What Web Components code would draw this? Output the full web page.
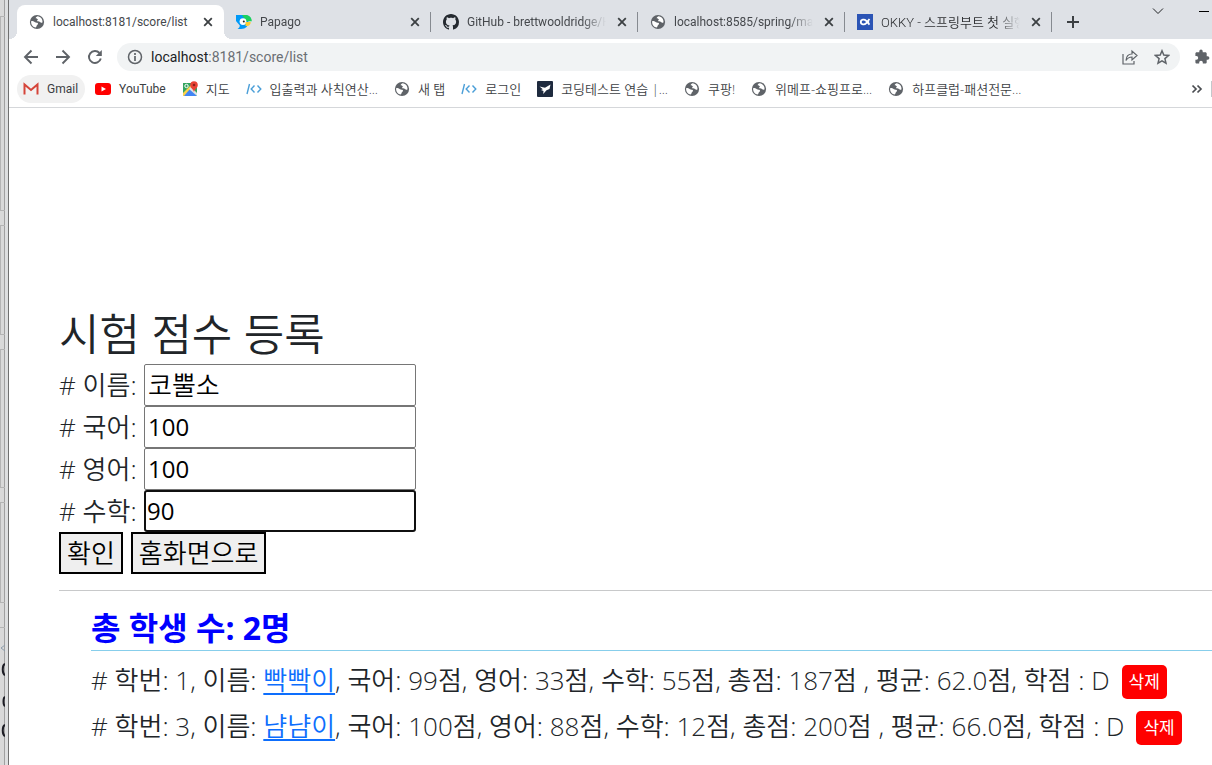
<!DOCTYPE html>
<html lang="ko">
<head>
<meta charset="UTF-8">
<title>localhost:8181/score/list</title>
<style>
  body {
    margin: 0;
    font-family: "Open Sans", "Noto Sans CJK KR", sans-serif;
    background: #fff;
  }
</style>
</head>
<body>
<browser-window>
  <tab-strip slot="top">
    <browser-tab icon="globe" active>localhost:8181/score/list</browser-tab>
    <browser-tab icon="papago">Papago</browser-tab>
    <browser-tab icon="github">GitHub - brettwooldridge/HikariCP</browser-tab>
    <browser-tab icon="globe">localhost:8585/spring/main</browser-tab>
    <browser-tab icon="okky" lang="ko">OKKY - 스프링부트 첫 실행</browser-tab>
  </tab-strip>
  <address-bar slot="top" host="localhost" path=":8181/score/list"></address-bar>
  <bookmark-bar slot="top">
    <bookmark-link icon="gmail" hot>Gmail</bookmark-link>
    <bookmark-link icon="youtube">YouTube</bookmark-link>
    <bookmark-link icon="maps" lang="ko">지도</bookmark-link>
    <bookmark-link icon="code" lang="ko">입출력과 사칙연산...</bookmark-link>
    <bookmark-link icon="globe" lang="ko">새 탭</bookmark-link>
    <bookmark-link icon="code" lang="ko">로그인</bookmark-link>
    <bookmark-link icon="programmers" lang="ko">코딩테스트 연습 |...</bookmark-link>
    <bookmark-link icon="globe" lang="ko">쿠팡!</bookmark-link>
    <bookmark-link icon="globe" lang="ko">위메프-쇼핑프로...</bookmark-link>
    <bookmark-link icon="globe" lang="ko">하프클럽-패션전문...</bookmark-link>
  </bookmark-bar>
  <score-form></score-form>
  <score-list></score-list>
</browser-window>

<script>
const icons = {
  globe: '<circle cx="8" cy="8" r="7.1" fill="#5f6368"/><path d="M2.3 7.1C3.5 7 5 7.6 6 8.3c.9.7 2.200.2 2.900 1 .5.7-.3 1.500-.9 2-.7.700-.5 1.700-1.200 2.200C4.100 13.300 2.100 11 2.100 8zM8.500 2.200c-1.200.5-2 1.300-1.700 2 .4.800 1.700.3 2 1 .3.800-1 1-.700 1.700.4.700 1.700.3 2.500.8.900.5 1.400 1.200 2.900.9C13.900 5.300 11.800 2.500 8.500 2.200z" fill="#fff"/>',
  papago: '<path d="M0 1h9c2.500 0 4.500 1 5.500 3L12 8c.4 4-2 7-7 7H1.500C3 14 3.800 13 3.800 11.500L0 7z" fill="#0099f7"/><path d="M6 1h3.500C13 1 15.800 3.500 15.800 7.200H10L8 4z" fill="#1bd15d"/><circle cx="7" cy="7.600" r="3.400" fill="#fff"/><circle cx="7.800" cy="7.400" r="1" fill="#222"/><path d="M9.500 8h5.200c0 3.300-2 4.500-5.200 4z" fill="#ffce32"/>',
  github: '<path fill="#24292f" d="M8 0C3.580 0 0 3.580 0 8c0 3.540 2.290 6.530 5.470 7.590.4.070.55-.17.55-.38 0-.19-.01-.82-.01-1.490-2.010.37-2.530-.49-2.690-.94-.09-.23-.48-.94-.82-1.130-.28-.15-.68-.52-.01-.53.63-.01 1.080.58 1.230.82.72 1.210 1.870.87 2.330.66.07-.52.28-.87.51-1.070-1.780-.2-3.640-.89-3.640-3.950 0-.87.31-1.590.82-2.150-.08-.2-.36-1.020.08-2.120 0 0 .67-.21 2.200.82.64-.18 1.320-.27 2-.27s1.360.09 2 .27c1.530-1.040 2.200-.82 2.200-.82.44 1.100.16 1.920.08 2.120.51.56.82 1.270.82 2.150 0 3.070-1.870 3.750-3.650 3.950.29.25.54.73.54 1.480 0 1.070-.01 1.930-.01 2.200 0 .21.15.46.55.38A8 8 0 0 0 16 8c0-4.420-3.580-8-8-8z"/>',
  okky: '<path d="M0 0h16v16H0z" fill="#2b54b5"/><path d="M12.500 5 9 9.300C7.500 11 3.800 10.700 3.800 8S7.500 5 9 6.700l3.500 4" fill="none" stroke="#fff" stroke-width="1.800"/><circle cx="11.300" cy="8" r="1" fill="#fff"/>',
  gmail: '<path d="M.5 13V3l7.500 6 7.500-6v10" fill="#f3f3f3"/><path d="M1.500 13.500V3.500L8 9l6.500-5.500v10" fill="none" stroke="#d5453a" stroke-width="2"/>',
  youtube: '<rect y="2" width="16" height="12" rx="3" fill="#f00"/><path d="M6.500 5.500v5L11 8z" fill="#fff"/>',
  maps: '<path d="M1 2h14v13H1z" fill="#34a45f"/><path d="m1 15 7-7 7 7z" fill="#4285f4"/><path d="M1 12 11 2h2L2 15H1z" fill="#fbd24b"/><path d="m7 8 2-2 6 6v3z" fill="#dfe3e5"/><circle cx="4.500" cy="5" r="1.700" fill="none" stroke="#fff"/><path d="M8.200 4a3.800 3.800 0 0 1 7.600 0c0 3-3 3.700-3.800 7-.8-3.300-3.800-4-3.800-7z" fill="#e94335"/><circle cx="12" cy="4" r="1.300" fill="#8c2119"/>',
  code: '<path d="M3.500 3 1 13M8.500 4.500 5.200 8l3.300 3.500M11.500 4.500 14.800 8l-3.300 3.500" fill="none" stroke="#4b9fd8" stroke-width="1.400"/>',
  programmers: '<rect width="16" height="16" rx="1" fill="#1e2a3e"/><path d="M2.500 5.500 8 6.800 13.500 3.500 12.500 8l-3 1.200L6.200 13l.3-3L4 9l1.800-.8z" fill="#fff"/>',
  close: '<path d="m4.200 4.200 7.600 7.600m0-7.600-7.600 7.600" stroke="#3c4043" stroke-width="1.800"/>',
  plus: '<path d="M8 2v12M2 8h12" stroke="#3c4043" stroke-width="2"/>',
  chevron: '<path d="m3 5.500 5 5 5-5" fill="none" stroke="#202124"/>',
  minimize: '<path d="M3 8.500h10" stroke="#000"/>',
  back: '<path d="M15 8H2m6.500-6.500L2 8l6.500 6.500" fill="none" stroke="#5f6368" stroke-width="1.900"/>',
  forward: '<path d="M1 8h13M7.500 1.500 14 8l-6.500 6.500" fill="none" stroke="#5f6368" stroke-width="1.900"/>',
  reload: '<path d="M13.800 9.500A6 6 0 1 1 12.500 4" fill="none" stroke="#5f6368" stroke-width="1.900"/><path d="M14.800 1v6H8.800z" fill="#5f6368"/>',
  info: '<circle cx="8" cy="8" r="6.500" fill="none" stroke="#5f6368" stroke-width="1.500"/><path d="M8 7v5M8 4v2" stroke="#5f6368" stroke-width="1.700"/>',
  share: '<path d="M1 5v10h11v-3M4 11.500C4.300 7 6.500 5 10 5V2l5 4.500-5 4.500V8C7.500 8 5.500 9 4 11.500z" fill="none" stroke="#5f6368" stroke-width="1.200"/>',
  star: '<path d="m8 1.800 1.800 4.300 4.700.4-3.600 3.100 1.100 4.600L8 11.800l-4 2.400 1.100-4.600L1.500 6.500l4.700-.4z" fill="none" stroke="#5f6368" stroke-width="1.500"/>',
  puzzle: '<path d="M13.700 7.300h-1V4.600c0-.7-.6-1.300-1.300-1.300H8.700v-1a1.700 1.700 0 0 0-3.400 0v1H2.700c-.7 0-1.300.6-1.300 1.300v2.500h1a1.800 1.800 0 0 1 0 3.600h-1v2.600c0 .7.600 1.300 1.300 1.300h2.500v-1a1.800 1.800 0 0 1 3.600 0v1h2.600c.7 0 1.300-.6 1.300-1.300v-2.600h1a1.700 1.700 0 0 0 0-3.400z" fill="#5f6368"/>',
  more: '<path d="m3.500 4.500 3.500 3.500-3.500 3.500m5-7L12 8l-3.500 3.500" fill="none" stroke="#4a4d51" stroke-width="1.700"/>'
};

function icon(name, size = 16) {
  return `<svg width="${size}" height="${size}" viewBox="0 0 16 16" aria-hidden="true">${icons[name]}</svg>`;
}

const baseStyle = `
  :host, * { box-sizing: border-box; }
  svg { flex: none; display: block; }
  button { font: inherit; }
  .icon-btn {
    display: flex;
    padding: 0;
    border: 0;
    background: none;
  }
`;

class BrowserWindow extends HTMLElement {
  connectedCallback() {
    this.attachShadow({ mode: 'open' });
    this.shadowRoot.innerHTML = `
      <style>
        ${baseStyle}
        :host {
          display: flex;
          height: 100vh;
          overflow: hidden;
        }
        /* edge of the windows lying behind the browser */
        .behind {
          flex: none;
          display: flex;
          flex-direction: column;
          gap: 14px;
          width: 9px;
          padding-top: 16px;
          background: #d9d9d9;
          border-right: 1px solid #707070;
          box-shadow: inset -3px 0 #dedfe0, inset -4px 0 #a0a0a0;
        }
        .panel {
          width: 5px;
          border: 1px solid #b4b4b4;
          border-right: 0;
        }
        .p1 { flex: 196; }
        .p2 { flex: 110; }
        .p3 { flex: 140; }
        .p4 { flex: 100; }
        .rest { flex: 151; }
        .window {
          flex: 1;
          min-width: 0;
          overflow: hidden;
        }
        header { border-bottom: 1px solid #d5d7da; }
        main { padding: 202px 0 0 50px; }
      </style>
      <div class="behind">
        <div class="panel p1"></div>
        <div class="panel p2"></div>
        <div class="panel p3"></div>
        <div class="panel p4"></div>
        <div class="rest">
          <svg width="5" height="140" viewBox="0 0 5 140" fill="none" aria-hidden="true">
            <path d="M0 10.500h5" stroke="#b4b4b4"/>
            <path d="m5 28-4 3 4 3" stroke="#8c9cab"/>
            <path d="M5 47c-3 1-3 10 0 11M5 80c-2 1-2 8 0 9M5 108c-3 1-3 10 0 11" stroke="#1c1c24" stroke-width="2"/>
          </svg>
        </div>
      </div>
      <div class="window">
        <header><slot name="top"></slot></header>
        <main><slot></slot></main>
      </div>
    `;
  }
}

class TabStrip extends HTMLElement {
  connectedCallback() {
    this.attachShadow({ mode: 'open' });
    this.shadowRoot.innerHTML = `
      <style>
        ${baseStyle}
        :host {
          display: flex;
          height: 39px;
          padding: 5px 0 0 8px;
          background: #dee1e6;
          font-family: Roboto, "Noto Sans CJK KR", sans-serif;
        }
        .tabs {
          display: flex;
          flex: 0 1 1035px;
          min-width: 0;
        }
        .new { align-items: center; margin-left: 13px; }
        .controls {
          display: flex;
          gap: 30px;
          height: 12px;
          align-items: center;
          margin-left: auto;
        }
      </style>
      <div class="tabs"><slot></slot></div>
      <button class="icon-btn new" aria-label="새 탭">${icon('plus')}</button>
      <div class="controls">
        <button class="icon-btn" aria-label="탭 검색">${icon('chevron')}</button>
        <button class="icon-btn" aria-label="최소화">${icon('minimize')}</button>
      </div>
    `;
  }
}

class BrowserTab extends HTMLElement {
  connectedCallback() {
    this.attachShadow({ mode: 'open' });
    this.shadowRoot.innerHTML = `
      <style>
        ${baseStyle}
        :host {
          position: relative;
          display: flex;
          flex: 1 1 0;
          min-width: 0;
          align-items: center;
          gap: 8px;
          padding: 0 8px 0 12px;
          font-size: 12px;
          color: #45484c;
          background: linear-gradient(#868a90, #868a90) right center / 1px 20px no-repeat;
        }
        :host([active]) {
          border-radius: 8px 8px 0 0;
          background: #fff;
        }
        :host([active])::before,
        :host([active])::after {
          content: "";
          position: absolute;
          bottom: 0;
          width: 8px;
          height: 8px;
        }
        :host([active])::before {
          right: 100%;
          background: radial-gradient(circle at 0 0, transparent 8px, #fff 8px);
        }
        :host([active])::after {
          left: 100%;
          background: radial-gradient(circle at 100% 0, transparent 8px, #fff 8px);
        }
        .title {
          flex: 1;
          overflow: hidden;
          white-space: nowrap;
          mask-image: linear-gradient(to left, transparent, #000 24px);
        }
        :host([active]) .title { mask-image: none; }
        :host([lang="ko"]) .title {
          padding-bottom: 2px;
          font-size: 13px;
          font-weight: 350;
          color: #2c2e31;
        }
      </style>
      ${icon(this.getAttribute('icon'))}
      <span class="title"><slot></slot></span>
      <button class="icon-btn" aria-label="탭 닫기">${icon('close')}</button>
    `;
  }
}

class AddressBar extends HTMLElement {
  connectedCallback() {
    this.attachShadow({ mode: 'open' });
    this.shadowRoot.innerHTML = `
      <style>
        ${baseStyle}
        :host {
          display: flex;
          align-items: center;
          padding: 4px 0 4px 14px;
          font-family: Roboto, "Noto Sans CJK KR", sans-serif;
        }
        .nav { display: flex; gap: 16px; }
        .box {
          display: flex;
          flex: 1;
          align-items: center;
          gap: 8px;
          height: 28px;
          margin: 0 14px;
          padding: 0 10px;
          border-radius: 14px;
          background: #f1f3f4;
          font-size: 14px;
          color: #6a6e73;
        }
        .url { flex: 1; }
        b { font-weight: 400; color: #202124; }
        .actions { display: flex; gap: 16px; }
        .ext { margin-right: 2px; }
      </style>
      <div class="nav">
        <button class="icon-btn" aria-label="뒤로">${icon('back')}</button>
        <button class="icon-btn" aria-label="앞으로">${icon('forward')}</button>
        <button class="icon-btn" aria-label="새로고침">${icon('reload')}</button>
      </div>
      <div class="box">
        ${icon('info')}
        <span class="url"><b>${this.getAttribute('host')}</b>${this.getAttribute('path')}</span>
        <div class="actions">
          <button class="icon-btn" aria-label="공유">${icon('share')}</button>
          <button class="icon-btn" aria-label="북마크">${icon('star')}</button>
        </div>
      </div>
      <button class="icon-btn ext" aria-label="확장 프로그램">${icon('puzzle')}</button>
    `;
  }
}

class BookmarkBar extends HTMLElement {
  connectedCallback() {
    this.attachShadow({ mode: 'open' });
    this.shadowRoot.innerHTML = `
      <style>
        ${baseStyle}
        :host {
          display: flex;
          align-items: center;
          height: 32px;
          padding: 0 0 4px 8px;
        }
        .more {
          margin-left: auto;
          padding-right: 6px;
          border-right: 1px solid #c4c7cb;
        }
      </style>
      <slot></slot>
      <button class="icon-btn more" aria-label="북마크 더보기">${icon('more')}</button>
    `;
  }
}

class BookmarkLink extends HTMLElement {
  connectedCallback() {
    this.attachShadow({ mode: 'open' });
    this.shadowRoot.innerHTML = `
      <style>
        ${baseStyle}
        :host {
          display: block;
          font-family: Roboto, sans-serif;
          font-size: 12px;
        }
        :host([lang="ko"]) {
          font-family: "Open Sans", "Noto Sans CJK KR", sans-serif;
          font-size: 13px;
          font-weight: 350;
        }
        a {
          display: flex;
          align-items: center;
          gap: 8px;
          height: 28px;
          margin-right: 4px;
          padding: 0 6px;
          border-radius: 14px;
          white-space: nowrap;
          color: #3c4043;
          text-decoration: none;
        }
        :host([lang="ko"]) span { padding-bottom: 2px; }
        :host([hot]) a { padding-right: 7px; background: #f1f1f1; }
      </style>
      <a href="#">${icon(this.getAttribute('icon'))}<span><slot></slot></span></a>
    `;
  }
}

class ScoreForm extends HTMLElement {
  connectedCallback() {
    const fields = [
      ['name', '이름', '코뿔소'],
      ['kor', '국어', '100'],
      ['eng', '영어', '100'],
      ['math', '수학', '90']
    ];
    this.attachShadow({ mode: 'open' });
    this.shadowRoot.innerHTML = `
      <style>
        ${baseStyle}
        :host {
          display: block;
          font-size: 26px;
          font-weight: 350;
          line-height: 42px;
          color: #212529;
          border-bottom: 1px solid #c8c9ca;
          padding-bottom: 16px;
        }
        h1 {
          margin: 0 0 6px;
          font-size: 44px;
          font-weight: 350;
          line-height: 48px;
        }
        .row { display: flex; }
        label { flex: 0 0 85px; white-space: nowrap; }
        input {
          width: 272px;
          height: 42px;
          padding: 1px 3px;
          border: 1px solid #767676;
          border-radius: 2px;
          font: inherit;
          font-size: 24px;
          font-weight: 400;
          color: #000;
          background: #fff;
        }
        #name { font-size: 26px; font-weight: 350; }
        #math {
          padding: 0 1px;
          border: 2px solid #101010;
          border-radius: 3px;
        }
        .buttons { display: flex; gap: 8px; }
        .buttons button {
          height: 42px;
          padding: 0 6px;
          border: 2px solid #000;
          background: #efefef;
          color: #000;
          line-height: 38px;
        }
      </style>
      <h1>시험 점수 등록</h1>
      <form>
        ${fields.map(([id, text, value]) => `
          <div class="row">
            <label for="${id}"># ${text}:</label>
            <input type="text" id="${id}" name="${id}" value="${value}">
          </div>
        `).join('')}
        <div class="buttons">
          <button type="button">확인</button>
          <button type="button">홈화면으로</button>
        </div>
      </form>
    `;
  }
}

class ScoreList extends HTMLElement {
  connectedCallback() {
    const students = [
      { num: 1, name: '빡빡이', kor: 99, eng: 33, math: 55, total: 187, avg: '62.0', grade: 'D' },
      { num: 3, name: '냠냠이', kor: 100, eng: 88, math: 12, total: 200, avg: '66.0', grade: 'D' }
    ];
    this.attachShadow({ mode: 'open' });
    this.shadowRoot.innerHTML = `
      <style>
        ${baseStyle}
        :host {
          display: block;
          padding: 16px 0 0 32px;
          font-size: 26px;
          font-weight: 350;
          color: #212529;
        }
        h2 {
          margin: 0;
          padding-bottom: 1px;
          border-bottom: 1px solid #87ceeb;
          font-size: 32px;
          line-height: 42px;
          color: #00f;
        }
        ul {
          margin: 0;
          padding: 8px 0 0;
          list-style: none;
        }
        li {
          display: flex;
          align-items: center;
          gap: 12px;
          height: 46px;
          white-space: nowrap;
        }
        span { padding-bottom: 6px; }
        a {
          color: #0d6efd;
          text-underline-offset: 3px;
          text-decoration-thickness: 2px;
        }
        .del {
          height: 34px;
          padding: 0 7px;
          border-radius: 5px;
          background: #f00;
          color: #fff;
          font-size: 17px;
          font-weight: 400;
          line-height: 34px;
          text-decoration: none;
        }
      </style>
      <h2>총 학생 수: ${students.length}명</h2>
      <ul>
        ${students.map(s => `
          <li>
            <span># 학번: ${s.num}, 이름: <a href="#">${s.name}</a>, 국어: ${s.kor}점, 영어: ${s.eng}점, 수학: ${s.math}점, 총점: ${s.total}점 , 평균: ${s.avg}점, 학점 : ${s.grade}</span>
            <a class="del" href="#">삭제</a>
          </li>
        `).join('')}
      </ul>
    `;
  }
}

customElements.define('browser-window', BrowserWindow);
customElements.define('tab-strip', TabStrip);
customElements.define('browser-tab', BrowserTab);
customElements.define('address-bar', AddressBar);
customElements.define('bookmark-bar', BookmarkBar);
customElements.define('bookmark-link', BookmarkLink);
customElements.define('score-form', ScoreForm);
customElements.define('score-list', ScoreList);
</script>
</body>
</html>
